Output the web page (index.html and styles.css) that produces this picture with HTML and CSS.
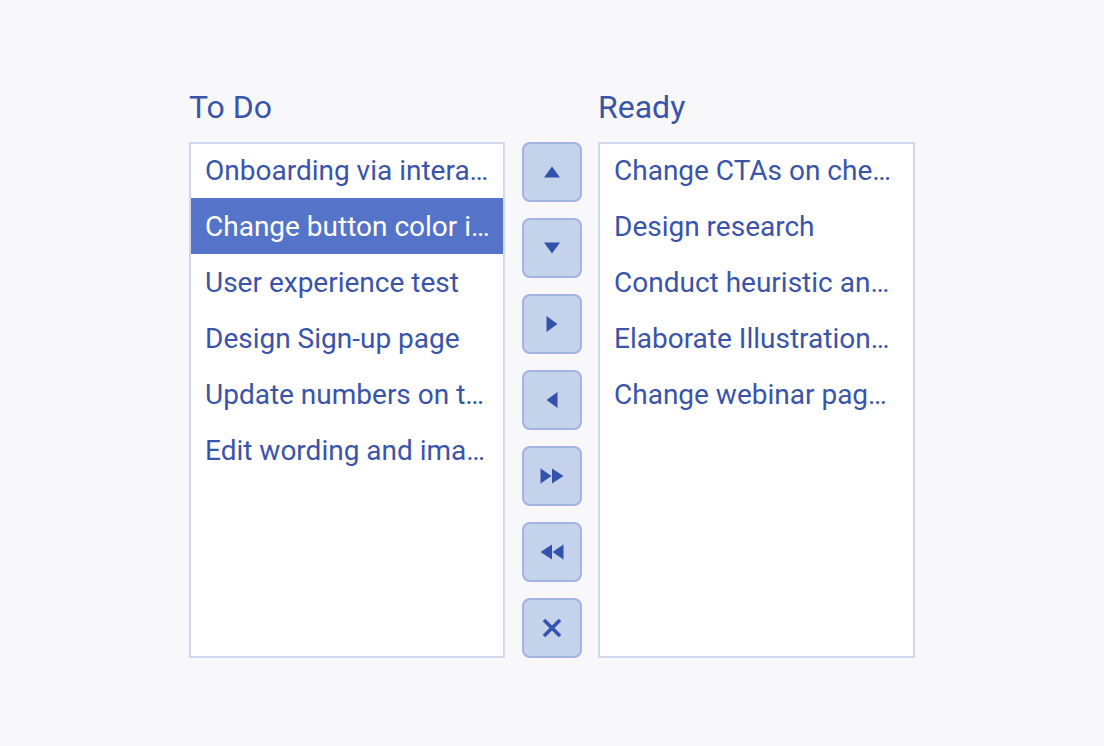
FILE: index.html
```html
<!DOCTYPE html>
<html>
<head>
<meta charset="utf-8">
<link rel="stylesheet" href="styles.css">
</head>
<body>
<div class="picker">
  <div class="column">
    <div class="title">To Do</div>
    <ul class="list list-left">
      <li class="item">Onboarding via interactive tutorial</li>
      <li class="item selected">Change button color in checkout</li>
      <li class="item">User experience test</li>
      <li class="item">Design Sign-up page</li>
      <li class="item">Update numbers on the landing page</li>
      <li class="item">Edit wording and images on homepage</li>
    </ul>
  </div>
  <div class="controls">
    <button class="btn" aria-label="Move up"><svg width="18" height="14" viewBox="0 0 18 14"><path d="M9 1.5 L17 12.5 L1 12.5 Z" fill="#3452ac"/></svg></button>
    <button class="btn" aria-label="Move down"><svg width="18" height="14" viewBox="0 0 18 14"><path d="M1 1.5 L17 1.5 L9 12.5 Z" fill="#3452ac"/></svg></button>
    <button class="btn" aria-label="Move right"><svg width="14" height="18" viewBox="0 0 14 18"><path d="M1.5 1 L12.5 9 L1.5 17 Z" fill="#3452ac"/></svg></button>
    <button class="btn" aria-label="Move left"><svg width="14" height="18" viewBox="0 0 14 18"><path d="M12.5 1 L1.5 9 L12.5 17 Z" fill="#3452ac"/></svg></button>
    <button class="btn" aria-label="Move all right"><svg width="26" height="18" viewBox="0 0 26 18"><path d="M1.5 1.5 L12.5 9 L1.5 16.5 Z M13 1.5 L24.5 9 L13 16.5 Z" fill="#3452ac"/></svg></button>
    <button class="btn" aria-label="Move all left"><svg width="26" height="18" viewBox="0 0 26 18"><path d="M13 1.5 L1.5 9 L13 16.5 Z M24.5 1.5 L13.5 9 L24.5 16.5 Z" fill="#3452ac"/></svg></button>
    <button class="btn" aria-label="Remove"><svg width="22" height="22" viewBox="0 0 22 22"><path d="M3 3 L19 19 M19 3 L3 19" stroke="#3452ac" stroke-width="3.6" fill="none"/></svg></button>
  </div>
  <div class="column">
    <div class="title">Ready</div>
    <ul class="list list-right">
      <li class="item">Change CTAs on checkout page</li>
      <li class="item">Design research</li>
      <li class="item">Conduct heuristic analysis</li>
      <li class="item">Elaborate Illustrations for blog</li>
      <li class="item">Change webinar page layout</li>
    </ul>
  </div>
</div>
</body>
</html>
```

FILE: styles.css
```css
html, body {
  margin: 0;
  padding: 0;
  background: #f8f8fa;
  font-family: Roboto, "Liberation Sans", sans-serif;
}

.picker {
  display: flex;
  align-items: flex-end;
  padding: 87px 0 0 189px;
}

.column {
  display: flex;
  flex-direction: column;
}

.title {
  font-size: 32px;
  color: #3a54a9;
  line-height: 40px;
  margin-bottom: 15px;
}

.list {
  list-style: none;
  margin: 0;
  padding: 0;
  height: 516px;
  box-sizing: border-box;
  background: #ffffff;
  outline: 2px solid #cfd8ec;
  outline-offset: -2px;
}

.list-left {
  width: 316px;
}

.list-right {
  width: 317px;
}

.item {
  display: block;
  box-sizing: border-box;
  height: 56px;
  padding-top: 2px;
  line-height: 54px;
  margin: 0 2px;
  padding-left: 14px;
  padding-right: 14px;
  font-size: 28px;
  color: #3a54a9;
  white-space: nowrap;
  overflow: hidden;
  text-overflow: ellipsis;
}

.list-left .item {
  padding-right: 10px;
}

.item.selected {
  background: #5573c8;
  color: #ffffff;
}

.controls {
  display: flex;
  flex-direction: column;
  gap: 16px;
  margin: 0 16px 0 17px;
}

.btn {
  width: 60px;
  height: 60px;
  box-sizing: border-box;
  border: 2px solid #a3b4e0;
  border-radius: 8px;
  background: #c4d2ec;
  display: flex;
  align-items: center;
  justify-content: center;
  padding: 0;
  cursor: pointer;
}
```
